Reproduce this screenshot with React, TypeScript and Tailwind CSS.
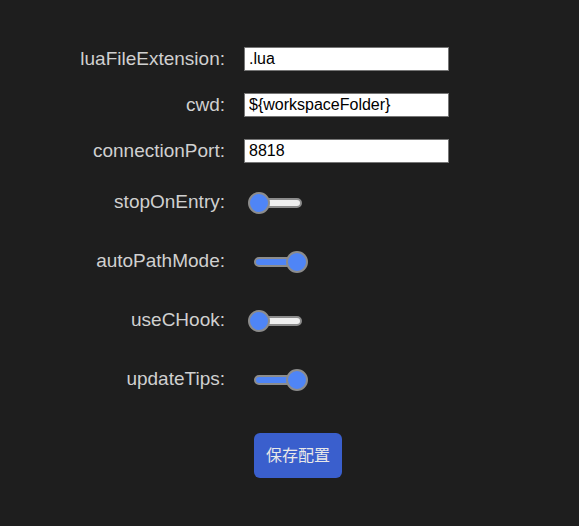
import { useState } from "react";

interface TextField {
  name: string;
  value: string;
}

interface Toggle {
  name: string;
  on: boolean;
}

const textFields: TextField[] = [
  { name: "luaFileExtension", value: ".lua" },
  { name: "cwd", value: "${workspaceFolder}" },
  { name: "connectionPort", value: "8818" },
];

const defaultToggles: Toggle[] = [
  { name: "stopOnEntry", on: false },
  { name: "autoPathMode", on: true },
  { name: "useCHook", on: false },
  { name: "updateTips", on: true },
];

function RangeSwitch({ on, onClick }: { on: boolean; onClick: () => void }) {
  return (
    <button
      type="button"
      onClick={onClick}
      className="relative ml-[4px] h-[22px] w-[60px] cursor-pointer"
    >
      <span
        className={`absolute left-[6px] right-[6px] top-[6px] h-[10px] overflow-hidden rounded-full border-2 border-[#8c8c8c] ${
          on ? "bg-[#4f85f6]" : "bg-[#efefef]"
        }`}
      />
      <span
        className={`absolute top-0 h-[22px] w-[22px] rounded-full border-2 border-[#8c8c8c] bg-[#4f85f6] ${
          on ? "right-0" : "left-0"
        }`}
      />
    </button>
  );
}

export default function App() {
  const [toggles, setToggles] = useState(defaultToggles);

  const flip = (i: number) =>
    setToggles(toggles.map((t, j) => (j === i ? { ...t, on: !t.on } : t)));

  return (
    <div
      className="min-h-[526px] w-full bg-[#1e1e1e] pt-[36px]"
      style={{ fontFamily: '"Liberation Sans", Arial, sans-serif' }}
    >
      {textFields.map((f) => (
        <div key={f.name} className="grid h-[46px] grid-cols-[225px_1fr] items-center gap-x-[19px]">
          <label className="text-right text-[19px] text-[#d0d0d0]">{f.name}:</label>
          <input
            defaultValue={f.value}
            className="h-[24px] w-[205px] border border-[#767676] bg-white px-[4px] text-[16px] text-black outline-none"
          />
        </div>
      ))}

      <div className="-mt-[1px]">
        {toggles.map((t, i) => (
          <div key={t.name} className="grid h-[59px] grid-cols-[225px_1fr] items-center gap-x-[19px]">
            <label className="text-right text-[19px] text-[#d0d0d0]">{t.name}:</label>
            <div className="flex items-center">
              <RangeSwitch on={t.on} onClick={() => flip(i)} />
            </div>
          </div>
        ))}
      </div>

      <div className="mt-[24px] grid grid-cols-[225px_1fr] gap-x-[19px]">
        <div />
        <div>
          <button
            type="button"
            className="ml-[10px] h-[45px] w-[88px] rounded-[6px] bg-[#3a5fcd] text-[16px] text-[#e8e8e8]"
            style={{ fontFamily: '"Liberation Sans", "Noto Sans CJK SC", sans-serif' }}
          >
            保存配置
          </button>
        </div>
      </div>
    </div>
  );
}
